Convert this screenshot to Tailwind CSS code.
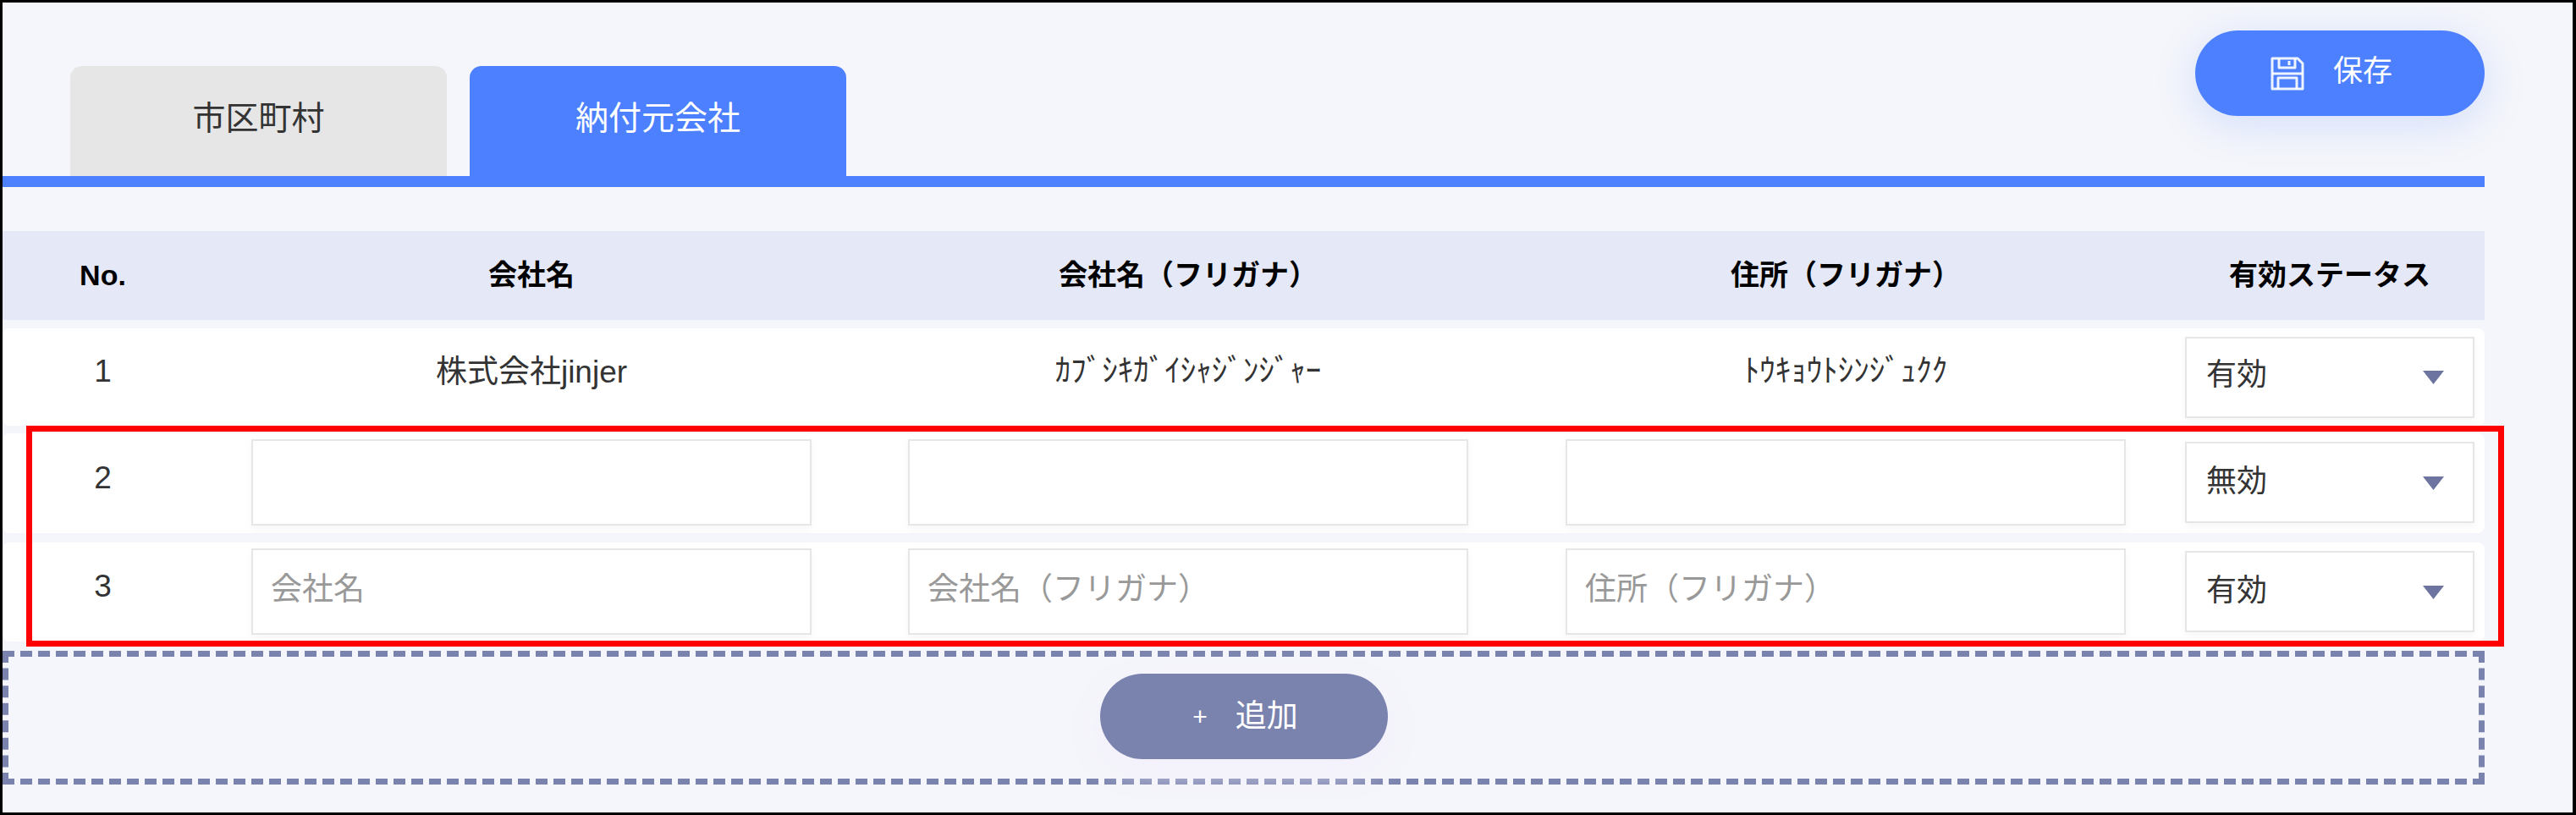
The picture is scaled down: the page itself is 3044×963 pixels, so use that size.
<!DOCTYPE html>
<html lang="ja">

<head>
    <meta charset="UTF-8">
    <title>納付元会社</title>
    <script src="https://cdn.jsdelivr.net/npm/@tailwindcss/browser@4"></script>
</head>

<body class="bg-white">
    <div class="relative w-[3044px] h-[963px] overflow-hidden bg-[#f5f6fb] border-[3px] border-r-[4px] border-black font-['Liberation_Sans','Noto_Sans_CJK_JP',sans-serif]">
        <div class="w-[2933px]">

            <!-- tabs and save -->
            <div class="flex justify-between h-[205px]">
                <div class="flex self-end gap-[27px] pl-[80px]">
                    <div class="w-[445px] h-[130px] pb-[6px] flex items-center justify-center rounded-t-[14px] bg-[#e6e6e6] text-[#333] text-[39px]">市区町村</div>
                    <div class="w-[445px] h-[130px] pb-[6px] flex items-center justify-center rounded-t-[14px] bg-[#4c80ff] text-white text-[39px]">納付元会社</div>
                </div>
                <button class="mt-[33px] w-[342px] h-[101px] pb-[5px] pr-[20px] flex items-center justify-center gap-[34px] rounded-full bg-[#4c80ff] text-white text-[35px] shadow-[0_10px_50px_rgba(76,128,255,0.2)]">
                    <svg class="w-[40px] h-[40px] mt-[5px]" viewBox="0 0 40 40" fill="none" stroke="#fff" stroke-width="3" stroke-opacity="0.9" stroke-linejoin="round">
                        <path d="M2 2H32L38 8V38H2Z" />
                        <path d="M10 2V13H29V2" />
                        <path d="M22 5V10" />
                        <path d="M2 20H38" />
                        <path d="M9 38V25H31V38" />
                    </svg>
                    <span>保存</span>
                </button>
            </div>
            <div class="h-[13px] bg-[#4c80ff]"></div>

            <!-- table head -->
            <div class="flex items-center mt-[52px] h-[105px] bg-[#e5e8f6] text-black text-[34px] font-bold">
                <div class="w-[237px] text-center">No.</div>
                <div class="ml-[57px] w-[662px] text-center">会社名</div>
                <div class="ml-[114px] w-[662px] text-center">会社名（フリガナ）</div>
                <div class="ml-[115px] w-[662px] text-center">住所（フリガナ）</div>
                <div class="ml-[70px] w-[342px] text-center">有効ステータス</div>
            </div>

            <!-- rows -->
            <div class="flex items-center mt-[10px] h-[115px] rounded-[8px] bg-white text-[#333] text-[37px] shadow-[0_2px_8px_rgba(0,0,0,0.01)]">
                <div class="w-[237px] pb-[13px] text-center">1</div>
                <div class="ml-[57px] w-[662px] pb-[11px] text-center">株式会社jinjer</div>
                <div class="ml-[114px] w-[662px] pb-[13px] text-center">ｶﾌﾞｼｷｶﾞｲｼｬｼﾞﾝｼﾞｬｰ</div>
                <div class="ml-[115px] w-[662px] pb-[13px] text-center">ﾄｳｷｮｳﾄｼﾝｼﾞｭｸｸ</div>
                <div class="ml-[70px] w-[342px] h-[96px] flex items-center justify-between pl-[23px] pr-[34px] pb-[5px] border-2 border-[#e6e6e6] bg-white text-[36px] shadow-[0_4px_10px_rgba(0,0,0,0.04)]">
                    <span>有効</span>
                    <svg class="w-[25px] h-[16px] mt-[6px]" viewBox="0 0 25 16" fill="#6c749f"><path d="M0 0H25L12.5 16Z" /></svg>
                </div>
            </div>

            <div class="flex items-center mt-[9px] h-[118px] pb-[2px] rounded-[8px] bg-white text-[#333] text-[37px] shadow-[0_2px_8px_rgba(0,0,0,0.01)]">
                <div class="w-[237px] pb-[11px] text-center">2</div>
                <input class="ml-[57px] w-[662px] h-[102px] px-[21px] pb-[5px] border-2 border-[#e6e6e6] bg-white text-[37px] shadow-[0_4px_10px_rgba(0,0,0,0.04)]">
                <input class="ml-[114px] w-[662px] h-[102px] px-[21px] pb-[5px] border-2 border-[#e6e6e6] bg-white text-[37px] shadow-[0_4px_10px_rgba(0,0,0,0.04)]">
                <input class="ml-[115px] w-[662px] h-[102px] px-[21px] pb-[5px] border-2 border-[#e6e6e6] bg-white text-[37px] shadow-[0_4px_10px_rgba(0,0,0,0.04)]">
                <div class="ml-[70px] w-[342px] h-[96px] flex items-center justify-between pl-[23px] pr-[34px] pb-[2px] border-2 border-[#e6e6e6] bg-white text-[36px] shadow-[0_4px_10px_rgba(0,0,0,0.04)]">
                    <span>無効</span>
                    <svg class="w-[25px] h-[16px] mt-[4px]" viewBox="0 0 25 16" fill="#6c749f"><path d="M0 0H25L12.5 16Z" /></svg>
                </div>
            </div>

            <div class="flex items-center mt-[11px] h-[117px] pb-[2px] rounded-[8px] bg-white text-[#333] text-[37px] shadow-[0_2px_8px_rgba(0,0,0,0.01)]">
                <div class="w-[237px] pb-[11px] text-center">3</div>
                <input class="ml-[57px] w-[662px] h-[102px] px-[21px] pb-[3px] border-2 border-[#e6e6e6] bg-white text-[37px] placeholder:text-[#999] shadow-[0_4px_10px_rgba(0,0,0,0.04)]" placeholder="会社名">
                <input class="ml-[114px] w-[662px] h-[102px] px-[21px] pb-[3px] border-2 border-[#e6e6e6] bg-white text-[37px] placeholder:text-[#999] shadow-[0_4px_10px_rgba(0,0,0,0.04)]" placeholder="会社名（フリガナ）">
                <input class="ml-[115px] w-[662px] h-[102px] px-[21px] pb-[3px] border-2 border-[#e6e6e6] bg-white text-[37px] placeholder:text-[#999] shadow-[0_4px_10px_rgba(0,0,0,0.04)]" placeholder="住所（フリガナ）">
                <div class="ml-[70px] w-[342px] h-[96px] flex items-center justify-between pl-[23px] pr-[34px] pb-[2px] border-2 border-[#e6e6e6] bg-white text-[36px] shadow-[0_4px_10px_rgba(0,0,0,0.04)]">
                    <span>有効</span>
                    <svg class="w-[25px] h-[16px] mt-[4px]" viewBox="0 0 25 16" fill="#6c749f"><path d="M0 0H25L12.5 16Z" /></svg>
                </div>
            </div>

            <!-- add row -->
            <div class="flex items-center justify-center mt-[11px] h-[158px] pb-[3px] border-[7px] border-dashed border-[#7a83ae]">
                <button class="w-[340px] h-[101px] pl-[4px] flex items-center justify-center gap-[33px] rounded-full bg-[#7a83ae] text-white text-[37px] shadow-[0_14px_40px_rgba(242,238,252,0.95)]">
                    <span class="text-[30px]">+</span>
                    <span>追加</span>
                </button>
            </div>
        </div>

        <!-- annotation over the table -->
        <div class="absolute left-[28px] top-[500px] w-[2928px] h-[261px] border-[7px] border-[#ff0000]"></div>
    </div>
</body>

</html>
